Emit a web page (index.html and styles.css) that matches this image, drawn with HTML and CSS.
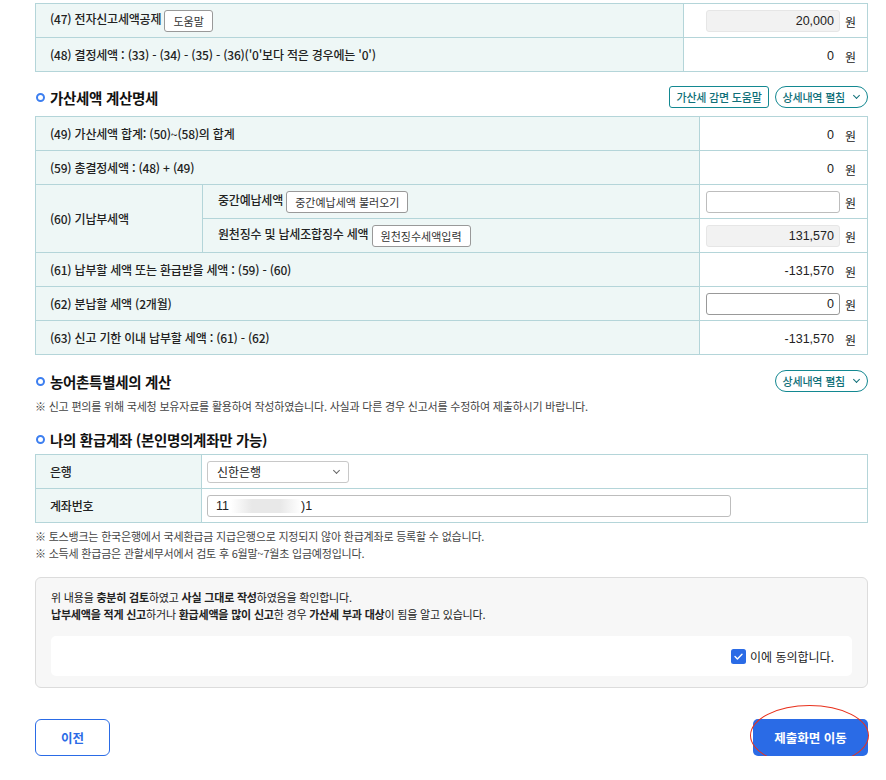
FILE: index.html
```html
<!DOCTYPE html>
<html lang="ko">
<head>
    <meta charset="UTF-8">
    <title>종합소득세 신고</title>
    <link rel="stylesheet" href="styles.css">
</head>
<body>
<div class="page">

    <table class="tax-table">
        <colgroup><col><col class="col-value-a"></colgroup>
        <tr>
            <th>(47) 전자신고세액공제 <button class="btn-sm">도움말</button></th>
            <td class="value"><span class="box readonly">20,000</span><span class="unit">원</span></td>
        </tr>
        <tr>
            <th>(48) 결정세액 : (33) - (34) - (35) - (36)('0'보다 적은 경우에는 '0')</th>
            <td class="value"><span class="num">0</span><span class="unit">원</span></td>
        </tr>
    </table>

    <div class="section-head">
        <h3>가산세액 계산명세</h3>
        <div class="head-btns">
            <button class="btn-teal">가산세 감면 도움말</button>
            <button class="btn-pill">상세내역 펼침 <span class="chev"></span></button>
        </div>
    </div>

    <table class="tax-table">
        <colgroup><col class="col-sub"><col><col class="col-value-b"></colgroup>
        <tr>
            <th colspan="2">(49) 가산세액 합계: (50)~(58)의 합계</th>
            <td class="value"><span class="num">0</span><span class="unit">원</span></td>
        </tr>
        <tr>
            <th colspan="2">(59) 총결정세액 : (48) + (49)</th>
            <td class="value"><span class="num">0</span><span class="unit">원</span></td>
        </tr>
        <tr>
            <th rowspan="2">(60) 기납부세액</th>
            <th class="sub">중간예납세액 <button class="btn-sm">중간예납세액 불러오기</button></th>
            <td class="value"><span class="box"></span><span class="unit">원</span></td>
        </tr>
        <tr>
            <th class="sub">원천징수 및 납세조합징수 세액 <button class="btn-sm">원천징수세액입력</button></th>
            <td class="value"><span class="box readonly">131,570</span><span class="unit">원</span></td>
        </tr>
        <tr>
            <th colspan="2">(61) 납부할 세액 또는 환급받을 세액 : (59) - (60)</th>
            <td class="value"><span class="num">-131,570</span><span class="unit">원</span></td>
        </tr>
        <tr>
            <th colspan="2">(62) 분납할 세액 (2개월)</th>
            <td class="value"><span class="box strong">0</span><span class="unit">원</span></td>
        </tr>
        <tr>
            <th colspan="2">(63) 신고 기한 이내 납부할 세액 : (61) - (62)</th>
            <td class="value"><span class="num">-131,570</span><span class="unit">원</span></td>
        </tr>
    </table>

    <div class="section-head head-2">
        <h3>농어촌특별세의 계산</h3>
        <div class="head-btns">
            <button class="btn-pill">상세내역 펼침 <span class="chev"></span></button>
        </div>
    </div>
    <p class="note">※ 신고 편의를 위해 국세청 보유자료를 활용하여 작성하였습니다. 사실과 다른 경우 신고서를 수정하여 제출하시기 바랍니다.</p>

    <div class="section-head head-3">
        <h3>나의 환급계좌 (본인명의계좌만 가능)</h3>
    </div>
    <table class="tax-table bank-table">
        <colgroup><col class="col-bank"><col></colgroup>
        <tr>
            <th>은행</th>
            <td><span class="select">신한은행 <span class="chev small"></span></span></td>
        </tr>
        <tr>
            <th>계좌번호</th>
            <td><span class="account">11<span class="blur"></span>)1</span></td>
        </tr>
    </table>
    <div class="notes">
        <p class="note">※ 토스뱅크는 한국은행에서 국세환급금 지급은행으로 지정되지 않아 환급계좌로 등록할 수 없습니다.</p>
        <p class="note">※ 소득세 환급금은 관할세무서에서 검토 후 6월말~7월초 입금예정입니다.</p>
    </div>

    <div class="agree-box">
        <p>위 내용을 <b>충분히 검토</b>하였고 <b>사실 그대로 작성</b>하였음을 확인합니다.</p>
        <p><b>납부세액을 적게 신고</b>하거나 <b>환급세액을 많이 신고</b>한 경우 <b>가산세 부과 대상</b>이 됨을 알고 있습니다.</p>
        <div class="agree-inner">
            <label class="check">
                <svg width="15" height="15" viewBox="0 0 15 15"><rect width="15" height="15" rx="2.5" fill="#2a6be6"/><path d="M4 7.6 L6.4 10 L11 5.2" fill="none" stroke="#fff" stroke-width="1.4" stroke-linecap="round" stroke-linejoin="round"/></svg>
                이에 동의합니다.
            </label>
        </div>
    </div>

    <div class="bottom-btns">
        <button class="btn-prev">이전</button>
        <div class="submit-wrap">
            <button class="btn-submit">제출화면 이동</button>
            <span class="mark"></span>
        </div>
    </div>

</div>
</body>
</html>
```

FILE: styles.css
```css
body {
    margin: 0;
    background: #fff;
    font-family: "Noto Sans CJK KR", "Noto Sans", sans-serif;
    color: #222;
    font-size: 12px;
}
.page {
    padding: 3px 18px 0 35px;
}
button {
    font-family: inherit;
    cursor: pointer;
}

/* tables */
.tax-table {
    width: 100%;
    border-collapse: collapse;
    table-layout: fixed;
}
.tax-table th,
.tax-table td {
    border: 1px solid #b4d5d9;
    height: 34px;
    padding: 0 0 0 14px;
    box-sizing: border-box;
}
.tax-table th {
    background: #eef7f6;
    font-weight: 500;
    text-align: left;
    font-size: 12px;
    letter-spacing: -0.2px;
}
.tax-table th.sub {
    padding-left: 15px;
}
.col-value-a { width: 184px; }
.col-value-b { width: 168px; }
.col-sub { width: 167px; }
.col-bank { width: 166px; }

.tax-table td.value {
    background: #fff;
    padding: 0 11px 0 5px;
    text-align: right;
    white-space: nowrap;
}
.num,
.box {
    font-family: "Liberation Sans", "Noto Sans CJK KR", sans-serif;
}
.num {
    display: inline-block;
    font-size: 12.5px;
    vertical-align: middle;
}
.unit {
    display: inline-block;
    margin-left: 11px;
    font-size: 12px;
    vertical-align: middle;
    position: relative;
    top: 1px;
}
.box {
    display: inline-block;
    width: 134px;
    height: 22px;
    line-height: 21px;
    box-sizing: border-box;
    border: 1px solid #bdbdbd;
    border-radius: 3px;
    padding-right: 5px;
    text-align: right;
    vertical-align: middle;
    background: #fff;
    font-size: 12.5px;
}
.box + .unit {
    margin-left: 5px;
}
.box.readonly {
    background: #f2f2f2;
    border-color: #e6e6e6;
}
.box.strong {
    border-color: #999;
}

.btn-sm {
    height: 22px;
    padding: 0 8px;
    margin-left: 0;
    background: #fff;
    border: 1px solid #999;
    border-radius: 3px;
    font-size: 11px;
    color: #333;
    vertical-align: middle;
}

/* section headers */
.section-head {
    display: flex;
    justify-content: space-between;
    align-items: center;
    height: 22px;
    margin: 14px 0 8px;
}
.section-head h3 {
    margin: 0;
    font-size: 14.5px;
    font-weight: 700;
    color: #111;
    display: flex;
    align-items: center;
    letter-spacing: -0.3px;
}
.section-head h3::before {
    content: "";
    width: 5px;
    height: 5px;
    border: 2px solid #3d7ff0;
    border-radius: 50%;
    margin: 0 5px 0 1px;
}
.head-2 { margin: 15px 0 6px; }
.head-3 { margin: 12px 0 3px; height: 24px; }
.head-btns {
    display: flex;
    gap: 6px;
}
.btn-teal {
    height: 22px;
    padding: 0 6px;
    border: 1px solid #138891;
    border-radius: 3px;
    background: #fff;
    color: #0f6f78;
    font-size: 11px;
    font-weight: 500;
    letter-spacing: -0.2px;
}
.btn-pill {
    height: 22px;
    padding: 0 8px 0 7px;
    border: 1px solid #138891;
    border-radius: 11px;
    background: #fff;
    color: #0f6f78;
    font-size: 11px;
    font-weight: 500;
    display: flex;
    align-items: center;
    letter-spacing: -0.2px;
}
.chev {
    display: inline-block;
    width: 4px;
    height: 4px;
    border-right: 1px solid #0f6f78;
    border-bottom: 1px solid #0f6f78;
    transform: rotate(45deg);
    margin: -3px 0 0 9px;
}
.chev.small {
    border-color: #666;
    margin: -3px 0 0 0;
}

.note {
    margin: 0;
    font-size: 11px;
    color: #444;
    line-height: 17px;
    letter-spacing: -0.2px;
}

/* bank */
.bank-table td {
    background: #fff;
    padding-left: 5px;
}
.select {
    display: flex;
    justify-content: space-between;
    align-items: center;
    width: 142px;
    height: 22px;
    box-sizing: border-box;
    border: 1px solid #c8c8c8;
    border-radius: 3px;
    padding: 0 9px 0 9px;
    font-size: 12px;
}
.account {
    display: flex;
    align-items: center;
    width: 524px;
    height: 22px;
    box-sizing: border-box;
    border: 1px solid #bdbdbd;
    border-radius: 3px;
    padding-left: 8px;
    font-size: 12.5px;
    font-family: "Liberation Sans", sans-serif;
}
.blur {
    display: inline-block;
    width: 70px;
    height: 14px;
    margin: 0 0 0 2px;
    background: linear-gradient(90deg, #fff, #e8e8e8 30%, #e8e8e8 70%, #fff);
}
.notes {
    margin-top: 5px;
}

/* agreement */
.agree-box {
    margin-top: 15px;
    background: #f7f7f7;
    border: 1px solid #dcdcdc;
    border-radius: 6px;
    padding: 11px 15px 11px;
}
.agree-box p {
    margin: 0;
    font-size: 11px;
    line-height: 17px;
    letter-spacing: -0.2px;
}
.agree-box b {
    font-weight: 700;
}
.agree-inner {
    margin-top: 13px;
    height: 40px;
    background: #fff;
    border-radius: 5px;
    display: flex;
    justify-content: flex-end;
    align-items: center;
    padding-right: 18px;
}
.check {
    display: flex;
    align-items: center;
    gap: 4px;
    font-size: 12px;
}

/* bottom */
.bottom-btns {
    display: flex;
    justify-content: space-between;
    margin-top: 31px;
}
.btn-prev {
    width: 75px;
    height: 37px;
    border: 1px solid #2a6be6;
    border-radius: 6px;
    background: #fff;
    color: #2a6be6;
    font-size: 12.5px;
    font-weight: 700;
}
.submit-wrap {
    position: relative;
}
.btn-submit {
    width: 115px;
    height: 37px;
    border: 0;
    border-radius: 5px;
    background: #2a6be6;
    color: #fff;
    font-size: 12.5px;
    font-weight: 700;
}
.mark {
    position: absolute;
    left: -3px;
    top: -14px;
    width: 117px;
    height: 59px;
    border: 1.5px solid #e8321e;
    border-radius: 50%;
    pointer-events: none;
}
```
